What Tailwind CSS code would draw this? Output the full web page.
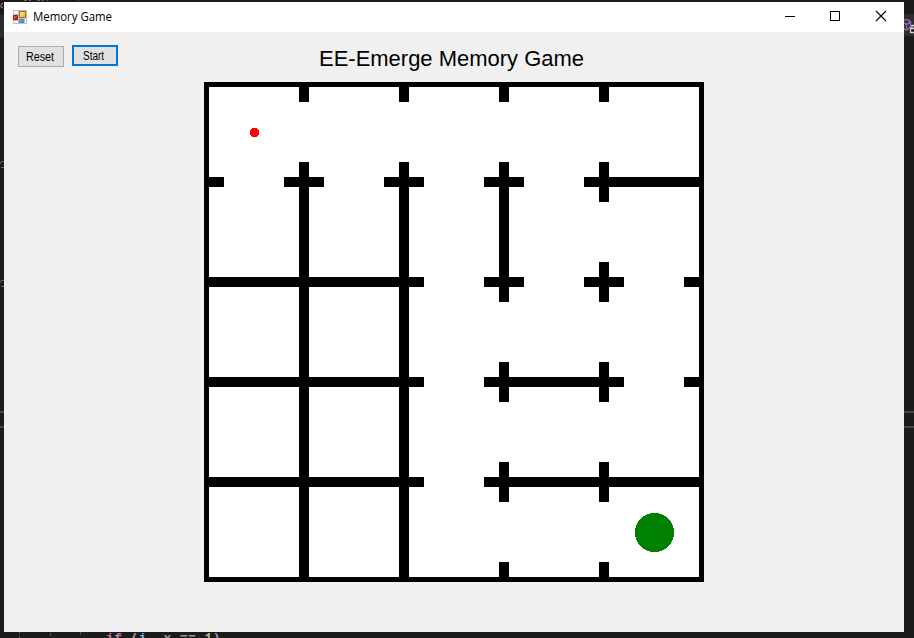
<!DOCTYPE html>
<html lang="en">
<head>
<meta charset="utf-8">
<title>Memory Game</title>
<script src="https://cdn.jsdelivr.net/npm/@tailwindcss/browser@4"></script>
</head>
<body class="relative h-[638px] w-[914px] overflow-hidden bg-[#1b1b1b] pt-[2px] pl-1 font-['Liberation_Sans',Arial,sans-serif] text-black">
<!-- Code editor visible around the window -->
<svg class="absolute inset-0" width="914" height="638" viewBox="0 0 914 638" shape-rendering="crispEdges" aria-hidden="true">
  <path fill="#2d2d2d" d="M0 15h4v22H0zM904 14h10v22h-10z"/>
  <path fill="#464646" d="M0 411h4v2H0zM0 426h4v2H0zM904 411h10v2h-10zM904 426h10v2h-10z"/>
  <path fill="#3a75ad" d="M1 161h3v1H1zM1 167h3v1H1zM1 280h3v1H1zM1 286h3v1H1z"/>
  <path fill="#46604a" d="M0 162h1v2H0zM0 281h1v2H0z"/>
  <path fill="#666" d="M24 0h3v1h-3zM29 0h2v1h-2zM37 0h3v1h-3zM42 0h2v1h-2zM47 0h1v1h-1zM78 0h1v1h-1z"/>
  <path fill="#555" d="M19 632h1v2h-1zM19 636h1v2h-1zM50 633h1v3h-1zM80 632h1v3h-1z"/>
  <g shape-rendering="auto" fill="none">
    <path stroke="#8b68b8" stroke-width="1.5" d="M904 20l3-.5 3.500 2v5.500l-4 3-2.500-1M904 23l2.500 1.500 4-2.500M906.500 24.500v4"/>
    <path fill="#1b1b1b" stroke="#ccc" stroke-width="1.3" d="M910.500 28.500h5v4h-5zM912 28v-2.500h3"/>
    <path stroke="#a98050" d="M3 3Q0 4 1 7L3 8"/>
  </g>
</svg>
<div class="absolute top-[631px] left-[106px] font-['Liberation_Mono',monospace] text-[13px] leading-[15px] font-bold tracking-[0.4px] whitespace-pre text-[#999]"><span class="text-[#b87cae]">if</span> (<span class="text-[#7db5d5]">i</span>.<span> x </span>== <span class="text-[#a5b99a]">1</span>)</div>

<main class="relative flex h-[630px] w-[900px] flex-col bg-[#f0f0f0]">
  <header class="flex h-[30px] shrink-0 items-center bg-white pl-[9px]">
    <svg class="mb-px" width="14" height="14" viewBox="0 0 14 14" aria-hidden="true">
      <defs>
        <linearGradient id="gold" x2="1" y2="1"><stop stop-color="#fff0a0"/><stop offset="1" stop-color="#efac12"/></linearGradient>
        <linearGradient id="red" x2="1" y2="1"><stop stop-color="#ef7868"/><stop offset="1" stop-color="#b40b04"/></linearGradient>
        <linearGradient id="blue" x2="1" y2="1"><stop stop-color="#94c4ff"/><stop offset="1" stop-color="#2e68d0"/></linearGradient>
      </defs>
      <path fill="#c0c0c0" d="M0 0h14v14H0z"/>
      <path fill="#fff" d="M1 1h4v3H1zM1 11h4v2H1zM12 9h1v4h-1z"/>
      <path fill="url(#gold)" stroke="#a47408" d="M6.500 1.500h6v6h-6z"/>
      <path fill="url(#red)" stroke="#a21a12" d="M.5 5.500h4v4h-4z"/>
      <path fill="url(#blue)" stroke="#4d7ed0" d="M6.500 9.500h4v3h-4z"/>
    </svg>
    <svg class="ml-[5px]" width="82" height="20" aria-label="Memory Game"><text x="1" y="14" textLength="79" lengthAdjust="spacingAndGlyphs" class="font-['Open_Sans',sans-serif] text-[12px]">Memory Game</text></svg>
    <div class="ml-auto flex">
      <svg width="46" height="30" viewBox="0 0 46 30" shape-rendering="crispEdges"><path fill="#000" d="M19 14h10v1H19z"/></svg>
      <svg width="46" height="30" viewBox="0 0 46 30" shape-rendering="crispEdges"><path fill="none" stroke="#000" d="M18.500 9.500h9v9h-9z"/></svg>
      <svg width="46" height="30" viewBox="0 0 46 30"><path fill="none" stroke="#000" stroke-width="1.100" d="M18 9l10 10M28 9l-10 10"/></svg>
    </div>
  </header>

  <div class="flex h-[50px] shrink-0 items-start">
    <div class="flex w-[200px] shrink-0 gap-2 pt-[13px] pl-[14px]">
      <button class="mt-px flex h-[21px] w-[46px] items-center justify-center border border-[#adadad] bg-[#e1e1e1]"><svg width="30" height="16"><text x="0" y="12" textLength="28" lengthAdjust="spacingAndGlyphs" class="text-[12px]">Reset</text></svg></button>
      <button class="flex h-[21px] w-[46px] items-center justify-center border-2 border-[#0078d7] bg-[#e1e1e1]"><svg width="24" height="16"><text x="0" y="12" textLength="21" lengthAdjust="spacingAndGlyphs" class="text-[12px]">Start</text></svg></button>
    </div>
    <h1 class="ml-[114px] pt-[10px]"><svg width="270" height="32"><text x="1" y="24" textLength="265" lengthAdjust="spacingAndGlyphs" class="text-[22px]">EE-Emerge Memory Game</text></svg></h1>
  </div>

  <svg class="ml-[200px] shrink-0 bg-white" width="500" height="500" viewBox="0 0 500 500" shape-rendering="crispEdges">
    <path fill="none" stroke="#000" stroke-width="5" d="M2.500 2.500h495v495h-495z"/>
    <g fill="none" stroke="#000" stroke-width="10">
      <path d="M100 0v20M100 80v420M200 0v20M200 80v420"/>
      <path d="M300 0v20M300 80v140M300 280v40M300 380v40M300 480v20"/>
      <path d="M400 0v20M400 80v40M400 180v40M400 280v40M400 380v40M400 480v20"/>
      <path d="M0 100h20M80 100h40M180 100h40M280 100h40M380 100h120"/>
      <path d="M0 200h220M280 200h40M380 200h40M480 200h20"/>
      <path d="M0 300h220M280 300h140M480 300h20"/>
      <path d="M0 400h220M280 400h220"/>
    </g>
    <circle cx="50.500" cy="50.500" r="4.800" fill="red"/>
    <circle cx="450.500" cy="450.500" r="19.700" fill="green"/>
  </svg>
</main>
</body>
</html>
